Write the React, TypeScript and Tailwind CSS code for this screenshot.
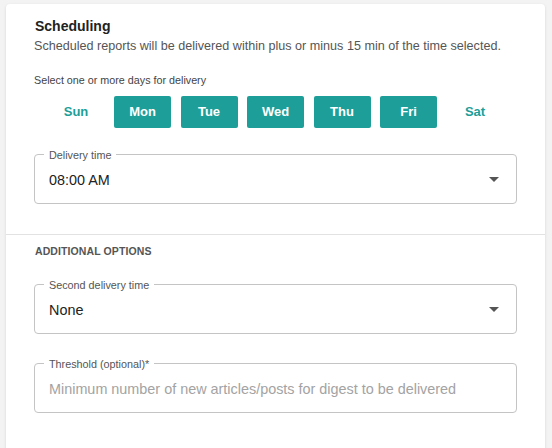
import React from 'react';

const days = [
  { name: 'Sun', on: false },
  { name: 'Mon', on: true },
  { name: 'Tue', on: true },
  { name: 'Wed', on: true },
  { name: 'Thu', on: true },
  { name: 'Fri', on: true },
  { name: 'Sat', on: false },
];

function Caret() {
  return (
    <svg width="10" height="5" viewBox="0 0 10 5" className="mr-[17px] shrink-0">
      <path d="M0 0 L10 0 L5 5 Z" fill="#555" />
    </svg>
  );
}

function OutlinedField({
  label,
  children,
  select = false,
}: {
  label: string;
  children: React.ReactNode;
  select?: boolean;
}) {
  return (
    <div className="relative h-[50px] rounded-[4px] border border-[#c4c4c4] flex items-center pl-[14px]">
      <span className="absolute left-[9px] top-[-7px] bg-white px-[5px] text-[10.8px] leading-[14px] text-[#555]">
        {label}
      </span>
      <div className="flex-1 pt-[2px]">{children}</div>
      {select && <Caret />}
    </div>
  );
}

export default function App() {
  return (
    <div
      className="min-h-[448px] h-[448px] overflow-hidden bg-[#f3f3f3] pt-[4px] pl-[6px]"
      style={{ fontFamily: '"Liberation Sans", Arial, sans-serif' }}
    >
      <div className="w-[539px] h-[460px] bg-white rounded-[4px] shadow-[0_1px_3px_rgba(0,0,0,0.12)]">
        <div className="px-[28px] pt-[13px]">
          <h2 className="text-[14px] leading-[18px] font-bold text-[#222] pl-[1px]">Scheduling</h2>
          <p className="mt-[2px] text-[12.6px] leading-[18px] text-[#555]">
            Scheduled reports will be delivered within plus or minus 15 min of the time selected.
          </p>
          <p className="mt-[18px] text-[10.75px] leading-[14px] text-[#444]">
            Select one or more days for delivery
          </p>
          <div className="mt-[9px] flex justify-center gap-[9.5px]">
            {days.map((d) => (
              <button
                key={d.name}
                className={
                  d.on
                    ? 'w-[57px] h-[32px] rounded-[2px] bg-[#1d9e98] text-white text-[13px] font-bold'
                    : 'w-[57px] h-[32px] rounded-[2px] bg-transparent text-[#1d9e98] text-[13px] font-bold'
                }
              >
                {d.name}
              </button>
            ))}
          </div>
          <div className="mt-[26px]">
            <OutlinedField label="Delivery time" select>
              <span className="text-[14.4px] text-[#222]">08:00 AM</span>
            </OutlinedField>
          </div>
        </div>

        <div className="mt-[30px] h-px bg-[#e2e2e2]" />

        <div className="px-[28px]">
          <p className="mt-[9px] pl-[1px] text-[10.5px] leading-[14px] font-bold tracking-[0.1px] text-[#555] uppercase">
            Additional options
          </p>
          <div className="mt-[26px]">
            <OutlinedField label="Second delivery time" select>
              <span className="text-[14.4px] text-[#222]">None</span>
            </OutlinedField>
          </div>
          <div className="mt-[29px]">
            <OutlinedField label="Threshold (optional)*">
              <span className="text-[14.4px] text-[#a3a3a3]">
                Minimum number of new articles/posts for digest to be delivered
              </span>
            </OutlinedField>
          </div>
        </div>
      </div>
    </div>
  );
}
